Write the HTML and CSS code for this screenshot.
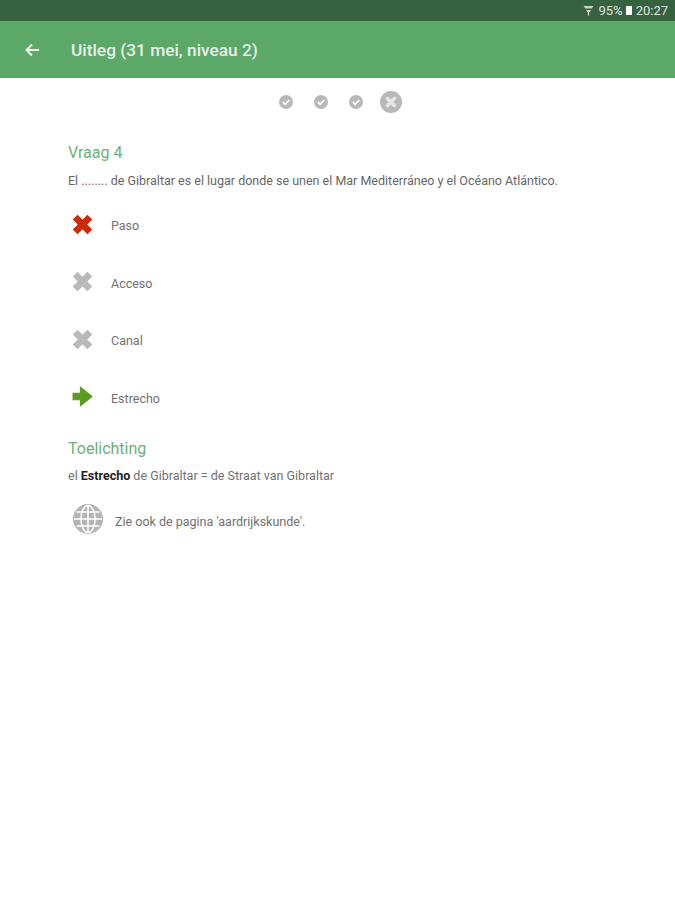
FILE: index.html
```html
<!DOCTYPE html>
<html lang="en">

<head>
    <meta charset="UTF-8">
    <meta name="viewport" content="width=device-width, initial-scale=1.0">
    <title>Uitleg</title>
    <link rel="stylesheet" href="styles.css">
</head>

<body>
    <!-- Status bar -->
    <div class="statusbar">
        <svg class="wifi" width="11" height="11" viewBox="0 0 11 11">
            <path d="M0.500 1h10L8.800 3.500H2.200zM3 5h5L6.800 7H4.200z" fill="#c4d2c6" />
            <path d="M5.500 7v3.500" stroke="#c4d2c6" stroke-width="1.500" />
        </svg>
        <span>95%</span>
        <span class="battery"></span>
        <span>20:27</span>
    </div>

    <!-- Toolbar -->
    <header class="toolbar">
        <svg class="back" width="16" height="14" viewBox="0 0 16 14">
            <path d="M15 7H2.500M8 1.500L2.500 7 8 12.500" fill="none" stroke="#eef6ef" stroke-width="2" />
        </svg>
        <h1>Uitleg (31 mei, niveau 2)</h1>
    </header>

    <!-- Progress -->
    <div class="progress">
        <svg class="dot" viewBox="0 0 14 14">
            <circle cx="7" cy="7" r="7" fill="#b8b8b8" />
            <path d="M3.800 7l2.300 2.300 4.200-4.200" fill="none" stroke="#fff" stroke-width="1.800" />
        </svg>
        <svg class="dot" viewBox="0 0 14 14">
            <circle cx="7" cy="7" r="7" fill="#b8b8b8" />
            <path d="M3.800 7l2.300 2.300 4.200-4.200" fill="none" stroke="#fff" stroke-width="1.800" />
        </svg>
        <svg class="dot" viewBox="0 0 14 14">
            <circle cx="7" cy="7" r="7" fill="#b8b8b8" />
            <path d="M3.800 7l2.300 2.300 4.200-4.200" fill="none" stroke="#fff" stroke-width="1.800" />
        </svg>
        <svg class="dot-big" viewBox="0 0 22 22">
            <circle cx="11" cy="11" r="11" fill="#b8b8b8" />
            <path d="M7.500 7.500l7 7M14.500 7.500l-7 7" fill="none" stroke="#e6e6e6" stroke-width="3.600" stroke-linecap="round" />
        </svg>
    </div>

    <main class="content">
        <h2>Vraag 4</h2>
        <p class="question">El ........ de Gibraltar es el lugar donde se unen el Mar Mediterráneo y el Océano Atlántico.</p>

        <ul class="answers">
            <li>
                <svg class="mark" viewBox="0 0 20 20">
                    <path d="M3 3l14 14M17 3L3 17" fill="none" stroke="#cc2a0c" stroke-width="6.500" />
                </svg>
                <span>Paso</span>
            </li>
            <li>
                <svg class="mark" viewBox="0 0 20 20">
                    <path d="M3 3l14 14M17 3L3 17" fill="none" stroke="#b9b9b9" stroke-width="6.500" />
                </svg>
                <span>Acceso</span>
            </li>
            <li>
                <svg class="mark" viewBox="0 0 20 20">
                    <path d="M3 3l14 14M17 3L3 17" fill="none" stroke="#b9b9b9" stroke-width="6.500" />
                </svg>
                <span>Canal</span>
            </li>
            <li>
                <svg class="mark" viewBox="0 0 20 20">
                    <path d="M1 7h7V1L19 10 8 19V13H1z" fill="#5d9a22" stroke="#5d9a22" stroke-width="1" stroke-linejoin="round" />
                </svg>
                <span>Estrecho</span>
            </li>
        </ul>

        <h2 class="explain-title">Toelichting</h2>
        <p class="explain">el <b>Estrecho</b> de Gibraltar = de Straat van Gibraltar</p>

        <div class="see-also">
            <svg class="globe" viewBox="0 0 30 30">
                <circle cx="15" cy="15" r="15" fill="#b4b4b4" />
                <g fill="none" stroke="#fff" stroke-width="1.500">
                    <ellipse cx="15" cy="15" rx="7" ry="13.500" />
                    <path d="M15 1v28M1 15h28M3.500 8h23M3.500 22h23" />
                </g>
            </svg>
            <span class="see-also-text">Zie ook de pagina 'aardrijkskunde'.</span>
        </div>
    </main>
</body>

</html>
```

FILE: styles.css
```css
body {
    margin: 0;
    background: #fff;
    font-family: Roboto, sans-serif;
    color: #717171;
}

.statusbar {
    height: 21px;
    padding-right: 7px;
    background: #37623f;
    color: #dfe8e0;
    font-size: 13px;
    display: flex;
    align-items: center;
    justify-content: flex-end;
}

.wifi {
    margin-right: 4px;
}

.battery {
    width: 6px;
    height: 9px;
    margin: 0 4px 0 3px;
    background: #fff;
}

.toolbar {
    height: 57px;
    background: #5ba868;
    display: flex;
    align-items: center;
}

.back {
    margin-left: 24px;
}

.toolbar h1 {
    margin: 0 0 0 31px;
    font-size: 17.300px;
    font-weight: 500;
    color: #e6f2e8;
}

.progress {
    height: 48px;
    padding-left: 278.500px;
    display: flex;
    align-items: center;
}

.dot {
    width: 14px;
    height: 14px;
    margin-right: 21px;
}

.dot-big {
    width: 22px;
    height: 22px;
    margin-left: -4px;
}

.content {
    padding: 17px 68px 0;
}

h2 {
    margin: 0;
    font-size: 16px;
    font-weight: 400;
    line-height: 20px;
    color: #6cb078;
}

.question {
    margin: 11px 0 0;
    font-size: 12.500px;
    line-height: 14px;
    color: #666;
}

.answers {
    list-style: none;
    margin: 9px 0 0;
    padding: 0;
}

.answers li {
    height: 57.500px;
    display: flex;
    align-items: center;
    font-size: 12.500px;
}

.mark {
    width: 21px;
    height: 21px;
    margin: 0 18px 3px 4px;
}

.explain-title {
    margin-top: 12px;
}

.explain {
    margin: 10px 0 0;
    font-size: 12.500px;
    line-height: 14px;
}

.explain b {
    color: #222;
}

.see-also {
    margin: 21px 0 0 5px;
    display: flex;
    align-items: center;
    font-size: 12.500px;
}

.see-also-text {
    padding-top: 4px;
}

.globe {
    width: 30px;
    height: 30px;
    margin-right: 12px;
}
```
